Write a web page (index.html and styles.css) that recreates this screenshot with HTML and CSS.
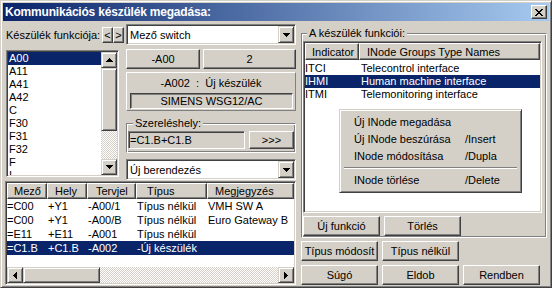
FILE: index.html
```html
<!DOCTYPE html>
<html lang="hu">
<head>
<meta charset="utf-8">
<title>Kommunikációs készülék megadása</title>
<link rel="stylesheet" href="styles.css">
</head>
<body>
<div class="window">
  <div class="titlebar">
    <span class="title">Kommunikációs készülék megadása:</span>
    <span class="close-btn">
      <svg width="8" height="7" viewBox="0 0 8 7"><path d="M0 0h2v1h1v1h2V1h1V0h2v1H7v1H6v1H5v1h1v1h1v1h1v1H6V6H5V5H3v1H2v1H0V6h1V5h1V4h1V3H2V2H1V1H0z" fill="#000"/></svg>
    </span>
  </div>
  <div class="main">
    <div class="left">
      <div class="row1">
        <span class="lbl">Készülék funkciója:</span>
        <span class="btn nav">&lt;</span>
        <span class="btn nav">&gt;</span>
        <div class="combo combo-top">
          <span class="combo-text">Mező switch</span>
          <span class="sbtn combo-btn"><svg width="7" height="4" viewBox="0 0 7 4"><path d="M0 0h7v1H6v1H5v1H4v1H3V3H2V2H1V1H0z"/></svg></span>
        </div>
      </div>
      <div class="mid">
        <div class="sunken listbox">
          <div class="lb-items">
            <div class="lb-item sel">A00</div>
            <div class="lb-item">A11</div>
            <div class="lb-item">A41</div>
            <div class="lb-item">A42</div>
            <div class="lb-item">C</div>
            <div class="lb-item">F30</div>
            <div class="lb-item">F31</div>
            <div class="lb-item">F32</div>
            <div class="lb-item">F</div>
            <div class="lb-item">I</div>
          </div>
          <div class="vscroll">
            <span class="sbtn sb-arrow"><svg width="7" height="4" viewBox="0 0 7 4"><path d="M3 0h1v1h1v1h1v1h1v1H0V3h1V2h1V1h1z"/></svg></span>
            <span class="sbtn vthumb"></span>
            <span class="track"></span>
            <span class="sbtn sb-arrow"><svg width="7" height="4" viewBox="0 0 7 4"><path d="M0 0h7v1H6v1H5v1H4v1H3V3H2V2H1V1H0z"/></svg></span>
          </div>
        </div>
        <div class="midright">
          <div class="btnpair">
            <span class="btn b-a00">-A00</span>
            <span class="btn b-2">2</span>
          </div>
          <div class="panel">
            <div class="panel-title">-A002  :  Új készülék</div>
            <div class="panel-box">SIMENS WSG12/AC</div>
          </div>
          <div class="group group-sz">
            <div class="group-title">Szereléshely:</div>
            <div class="sz-row">
              <span class="sunken edit-ro">=C1.B+C1.B</span>
              <span class="btn b-more">&gt;&gt;&gt;</span>
            </div>
          </div>
          <div class="combo combo-ber">
            <span class="combo-text">Új berendezés</span>
            <span class="sbtn combo-btn"><svg width="7" height="4" viewBox="0 0 7 4"><path d="M0 0h7v1H6v1H5v1H4v1H3V3H2V2H1V1H0z"/></svg></span>
          </div>
        </div>
      </div>
      <div class="sunken listview lv-left">
        <div class="lv-head">
          <span class="hcell h1">Mező</span>
          <span class="hcell h2">Hely</span>
          <span class="hcell h3">Tervjel</span>
          <span class="hcell h4">Típus</span>
          <span class="hcell h5">Megjegyzés</span>
        </div>
        <div class="lv-body">
          <div class="lv-row"><span class="c c1">=C00</span><span class="c">+Y1</span><span class="c">-A00/1</span><span class="c">Típus nélkül</span><span class="c">VMH SW A</span></div>
          <div class="lv-row"><span class="c c1">=C00</span><span class="c">+Y1</span><span class="c">-A00/B</span><span class="c">Típus nélkül</span><span class="c">Euro Gateway B</span></div>
          <div class="lv-row"><span class="c c1">=E11</span><span class="c">+E11</span><span class="c">-A001</span><span class="c">Típus nélkül</span><span class="c"></span></div>
          <div class="lv-row sel"><span class="c c1">=C1.B</span><span class="c">+C1.B</span><span class="c">-A002</span><span class="c">-Új készülék</span><span class="c"></span></div>
        </div>
        <div class="hscroll">
          <span class="sbtn sb-arrow"><svg width="4" height="7" viewBox="0 0 4 7"><path d="M3 0h1v7H3V6H2V5H1V4H0V3h1V2h1V1h1z"/></svg></span>
          <span class="sbtn hthumb"></span>
          <span class="track"></span>
          <span class="sbtn sb-arrow"><svg width="4" height="7" viewBox="0 0 4 7"><path d="M0 0h1v1h1v1h1v1h1v1H3v1H2v1H1v1H0z"/></svg></span>
        </div>
      </div>
    </div>
    <div class="right">
      <div class="group group-fn">
        <div class="group-title">A készülék funkciói:</div>
        <div class="sunken listview lv-right">
          <div class="lv-head">
            <span class="hcell r1">Indicator</span>
            <span class="hcell r2">INode Groups Type Names</span>
          </div>
          <div class="lv-body">
            <div class="lv-row"><span class="c c1">ITCI</span><span class="c">Telecontrol interface</span></div>
            <div class="lv-row sel"><span class="c c1">IHMI</span><span class="c">Human machine interface</span></div>
            <div class="lv-row"><span class="c c1">ITMI</span><span class="c">Telemonitoring interface</span></div>
          </div>
        </div>
        <div class="btnrow">
          <span class="btn wbtn">Új funkció</span>
          <span class="btn wbtn">Törlés</span>
        </div>
      </div>
      <div class="btnrow row-b">
        <span class="btn wbtn">Típus módosít</span>
        <span class="btn wbtn">Típus nélkül</span>
      </div>
      <div class="btnrow row-c">
        <span class="btn wbtn">Súgó</span>
        <span class="btn wbtn">Eldob</span>
        <span class="btn wbtn">Rendben</span>
      </div>
    </div>
  </div>
  <div class="menu">
    <div class="mitem"><span class="mlabel">Új INode megadása</span><span class="mkey"></span></div>
    <div class="mitem"><span class="mlabel">Új INode beszúrása</span><span class="mkey">/Insert</span></div>
    <div class="mitem"><span class="mlabel">INode módosítása</span><span class="mkey">/Dupla</span></div>
    <div class="msep"></div>
    <div class="mitem"><span class="mlabel">INode törlése</span><span class="mkey">/Delete</span></div>
  </div>
</div>
</body>
</html>
```

FILE: styles.css
```css
* { box-sizing: border-box; }
html, body { margin: 0; padding: 0; }
body {
  width: 552px;
  height: 288px;
  overflow: hidden;
  background: #d4d0c8;
  font-family: "Liberation Sans", Arial, sans-serif;
  font-size: 11px;
  color: #000;
}

.window {
  position: relative;
  width: 552px;
  height: 288px;
  background: #d4d0c8;
  border: 1px solid;
  border-color: #d4d0c8 #404040 #404040 #d4d0c8;
  box-shadow: inset 1px 1px #fff, inset -1px -1px #808080;
  padding: 2px;
  display: flex;
  flex-direction: column;
}

/* Title bar */
.titlebar {
  flex: none;
  height: 18px;
  display: flex;
  align-items: center;
  padding: 0 2px;
  background: linear-gradient(to right, #0a246a, #a6caf0);
}
.title {
  color: #fff;
  font-weight: bold;
  font-size: 12px;
  letter-spacing: -0.2px;
  white-space: nowrap;
}
.close-btn {
  margin-left: auto;
  width: 16px;
  height: 14px;
  background: #d4d0c8;
  border: 1px solid;
  border-color: #fff #404040 #404040 #fff;
  box-shadow: inset -1px -1px #808080;
  display: flex;
  align-items: center;
  justify-content: center;
}
.close-btn svg { display: block; }

/* Generic controls */
.btn {
  display: flex;
  align-items: center;
  justify-content: center;
  background: #d4d0c8;
  border: 1px solid;
  border-color: #fff #404040 #404040 #fff;
  box-shadow: inset -1px -1px #808080;
  white-space: nowrap;
}
.sbtn {
  display: flex;
  align-items: center;
  justify-content: center;
  background: #d4d0c8;
  border: 1px solid;
  border-color: #d4d0c8 #404040 #404040 #d4d0c8;
  box-shadow: inset 1px 1px #fff, inset -1px -1px #808080;
}
.sbtn svg { display: block; fill: #000; }
.sunken {
  border: 1px solid;
  border-color: #808080 #fff #fff #808080;
  box-shadow: inset 1px 1px #404040, inset -1px -1px #d4d0c8;
  padding: 1px;
}
.track {
  flex: 1;
  background: repeating-conic-gradient(#fff 0 25%, #d4d0c8 0 50%) 0 0 / 2px 2px;
}
.group {
  border: 1px solid;
  border-color: #808080 #fff #fff #808080;
  box-shadow: inset 1px 1px #fff, inset -1px -1px #808080;
  padding: 0 1px 1px 1px;
}
.group-title {
  width: max-content;
  margin-top: -7px;
  height: 13px;
  line-height: 13px;
  padding: 0 2px;
  background: #d4d0c8;
  white-space: nowrap;
}

/* Layout */
.main {
  flex: 1;
  display: flex;
  padding-left: 3px;
}
.left {
  width: 290px;
  display: flex;
  flex-direction: column;
}
.right {
  width: 246px;
  margin-left: 5px;
  display: flex;
  flex-direction: column;
}

/* Row 1 */
.row1 {
  margin-top: 3px;
  height: 21px;
  display: flex;
  align-items: center;
}
.lbl { width: 96px; white-space: nowrap; }
.nav { width: 11px; height: 16px; }

.combo {
  height: 21px;
  display: flex;
  align-items: center;
  background: #fff;
  border: 1px solid;
  border-color: #808080 #fff #fff #808080;
  box-shadow: inset 1px 1px #404040, inset -1px -1px #d4d0c8;
  padding: 1px;
}
.combo-text { flex: 1; padding-left: 2px; white-space: nowrap; }
.combo-btn { width: 16px; height: 17px; }
.combo-top { margin-left: 2px; width: 170px; }

/* Middle */
.mid {
  margin-top: 4px;
  height: 132px;
  display: flex;
  align-items: flex-start;
}
.listbox {
  margin-top: 1px;
  width: 113px;
  height: 127px;
  display: flex;
  background: #fff;
}
.lb-items { flex: 1; overflow: hidden; }
.lb-item {
  height: 13px;
  line-height: 13px;
  padding-left: 1px;
  white-space: nowrap;
}
.lb-item.sel { background: #0a246a; color: #fff; }
.vscroll {
  width: 16px;
  display: flex;
  flex-direction: column;
}
.vscroll .sb-arrow { height: 16px; }
.vthumb { height: 63px; }

.midright {
  margin-left: 7px;
  width: 170px;
  display: flex;
  flex-direction: column;
}
.btnpair { display: flex; height: 20px; }
.b-a00 { width: 74px; }
.b-2 { width: 93px; margin-left: 3px; }

.panel {
  margin-top: 3px;
  height: 39px;
  border: 1px solid;
  border-color: #fff #808080 #808080 #fff;
  display: flex;
  flex-direction: column;
}
.panel-title {
  margin-top: 3px;
  height: 14px;
  line-height: 14px;
  text-align: center;
  white-space: pre;
}
.panel-box {
  margin: 3px 2px 0 3px;
  height: 16px;
  border: 1px solid;
  border-color: #404040 #fff #fff #404040;
  box-shadow: inset 1px 1px #808080;
  display: flex;
  align-items: center;
  justify-content: center;
  white-space: nowrap;
}

.group-sz {
  margin-top: 12px;
  height: 30px;
}
.group-sz .group-title { margin-left: 5px; }
.sz-row {
  margin-top: 1px;
  height: 18px;
  display: flex;
}
.edit-ro {
  width: 117px;
  height: 18px;
  display: flex;
  align-items: center;
  background: #d4d0c8;
  white-space: nowrap;
}
.b-more { width: 45px; margin-left: 4px; }

.combo-ber { margin-top: 6px; width: 170px; }

/* List views */
.listview {
  background: #fff;
  display: flex;
  flex-direction: column;
  overflow: hidden;
}
.lv-head { display: grid; flex: none; }
.hcell {
  display: flex;
  align-items: center;
  background: #d4d0c8;
  border: 1px solid;
  border-color: #fff #404040 #404040 #fff;
  box-shadow: inset -1px -1px #808080;
  white-space: nowrap;
  overflow: hidden;
}
.lv-row { display: grid; }
.lv-row.sel { background: #0a246a; color: #fff; }
.c { white-space: nowrap; overflow: hidden; padding-left: 1px; }
.c.c1 { padding-left: 0; }

.lv-left {
  margin-top: 0;
  margin-left: -1px;
  width: 291px;
  height: 104px;
}
.lv-left .lv-head,
.lv-left .lv-row { grid-template-columns: 40px 40px 49px 71px 87px; }
.lv-left .lv-head { height: 16px; }
.lv-left .lv-body { flex: 1; }
.lv-left .lv-row { height: 14px; line-height: 14px; }
.h1 { padding-left: 6px; }
.h2 { padding-left: 7px; }
.h3 { padding-left: 8px; }
.h4 { padding-left: 10px; }
.h5 { padding-left: 7px; }

.hscroll {
  height: 16px;
  flex: none;
  display: flex;
}
.hscroll .sb-arrow { width: 16px; }
.hthumb { width: 77px; }

/* Right side */
.group-fn { margin-top: 12px; }
.group-fn .group-title { margin-left: 4px; }
.lv-right {
  margin-top: 1px;
  width: 239px;
  height: 172px;
}
.lv-right .lv-head,
.lv-right .lv-row { grid-template-columns: 54px 181px; }
.lv-right .lv-head { height: 17px; }
.lv-right .lv-body { padding-top: 2px; }
.lv-right .lv-row { height: 13px; line-height: 13px; }
.lv-right .lv-row .c { padding-left: 2px; }
.lv-right .lv-row .c.c1 { padding-left: 0; }
.r1 { padding-left: 6px; }
.r2 { padding-left: 7px; }

.btnrow {
  margin-top: 3px;
  display: flex;
  gap: 4px;
}
.row-c { margin-top: 4px; }
.wbtn { width: 77px; height: 20px; }

/* Context menu */
.menu {
  position: absolute;
  left: 338px;
  top: 108px;
  width: 183px;
  height: 84px;
  background: #d4d0c8;
  border: 1px solid;
  border-color: #d4d0c8 #404040 #404040 #d4d0c8;
  box-shadow: inset 1px 1px #fff, inset -1px -1px #808080;
  padding: 3px 2px 4px 2px;
}
.mitem {
  height: 17px;
  display: flex;
  align-items: center;
  padding-left: 12px;
  white-space: nowrap;
}
.mlabel { width: 111px; }
.msep {
  margin: 3px 2px 2px;
  border-top: 1px solid #808080;
  border-bottom: 1px solid #fff;
}
```
